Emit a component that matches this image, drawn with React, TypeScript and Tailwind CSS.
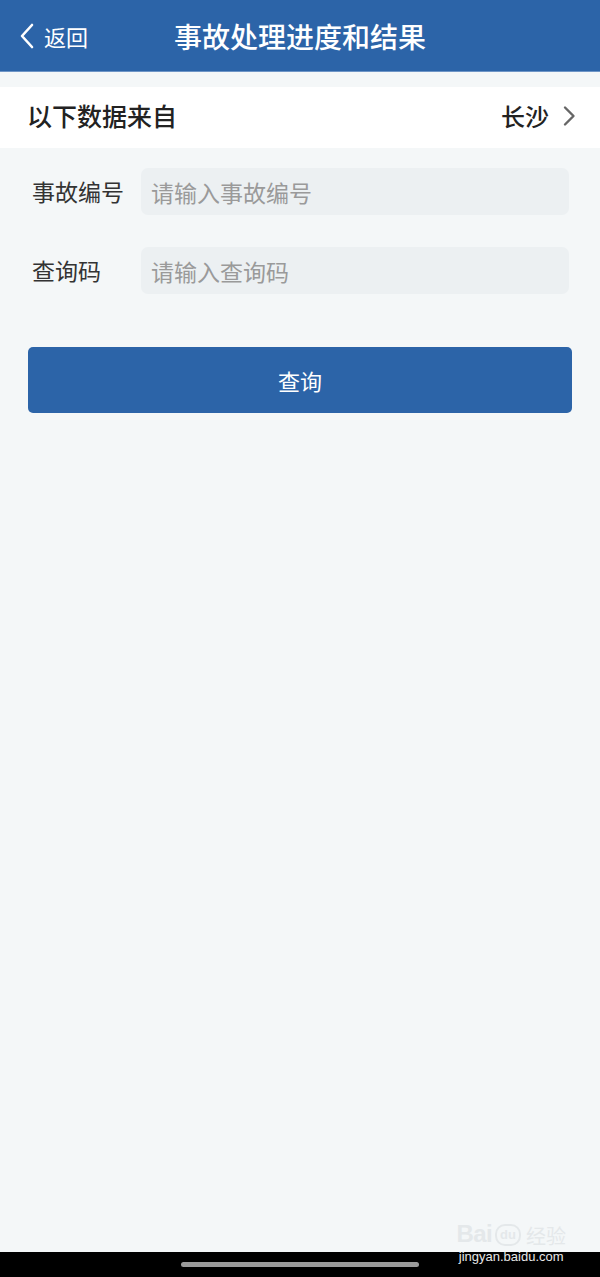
import React from "react";

const fields = [
  { label: "事故编号", placeholder: "请输入事故编号" },
  { label: "查询码", placeholder: "请输入查询码" },
];

export default function App() {
  return (
    <div
      className="relative w-[600px] h-[1277px] flex flex-col bg-[#f4f7f8] overflow-hidden"
      style={{ fontFamily: '"Noto Sans CJK SC", "Noto Sans", sans-serif' }}
    >
      {/* Header */}
      <header className="h-[72px] shrink-0 bg-[#2c64a8] border-b border-[#6e95c6] flex items-center relative">
        <button className="flex items-center pl-[18px] text-white">
          <svg width="18" height="28" viewBox="0 0 18 28" fill="none">
            <path d="M14 3 L4 14 L14 25" stroke="white" strokeWidth="2.6" strokeLinecap="round" strokeLinejoin="round" />
          </svg>
          <span className="ml-[8px] text-[22px] leading-none">返回</span>
        </button>
        <h1 className="absolute left-0 right-0 text-center text-white text-[28px] font-medium leading-none pointer-events-none">
          事故处理进度和结果
        </h1>
      </header>

      {/* Data source */}
      <div className="mt-[15px] h-[61px] bg-white flex items-center justify-between pl-[27px] pr-[24px]">
        <span className="text-[25px] font-medium text-[#222] mb-[3px]">以下数据来自</span>
        <div className="flex items-center gap-[13px] mb-[3px]">
          <span className="text-[24px] font-medium text-[#222]">长沙</span>
          <svg width="14" height="22" viewBox="0 0 14 22" fill="none">
            <path d="M3 2.5 L11.5 11 L3 19.5" stroke="#666" strokeWidth="2.4" strokeLinecap="round" strokeLinejoin="round" />
          </svg>
        </div>
      </div>

      {/* Form */}
      <div className="flex flex-col gap-[32px] pt-[20px] pl-[32px] pr-[31px]">
        {fields.map((f) => (
          <div key={f.label} className="flex items-center">
            <label className="w-[109px] shrink-0 text-[23px] text-[#333]">{f.label}</label>
            <input
              placeholder={f.placeholder}
              className="flex-1 h-[47px] rounded-[7px] bg-[#ecf0f2] px-[10px] text-[23px] text-[#333] placeholder:text-[#9a9a9a] outline-none"
            />
          </div>
        ))}
      </div>

      <div className="px-[28px] mt-[53px]">
        <button className="w-full h-[66px] rounded-[5px] bg-[#2c64a8] text-white text-[22px]">查询</button>
      </div>

      <div className="flex-1" />

      {/* Bottom navigation bar */}
      <div className="h-[25px] shrink-0 bg-black flex justify-center items-center">
        <div className="w-[238px] h-[5px] rounded-full bg-[#9a9a9a]" />
      </div>

      {/* Watermark */}
      <div className="absolute right-[34px] bottom-[14px] flex flex-col items-center pointer-events-none">
        <div className="flex items-end gap-[3px] text-[#e4e8ea]">
          <span className="text-[24px] font-bold leading-none tracking-tight" style={{ fontFamily: '"Liberation Sans", sans-serif' }}>Bai</span>
          <span className="w-[26px] h-[22px] rounded-[10px] border-2 border-[#e4e8ea] text-[13px] font-bold leading-[18px] text-center" style={{ fontFamily: '"Liberation Sans", sans-serif' }}>
            du
          </span>
          <span className="text-[20px] leading-none ml-[2px]">经验</span>
        </div>
        <span className="text-[13px] leading-none mt-[4px] text-[#e8e8e8]" style={{ fontFamily: '"Liberation Sans", sans-serif' }}>
          jingyan.baidu.com
        </span>
      </div>
    </div>
  );
}
